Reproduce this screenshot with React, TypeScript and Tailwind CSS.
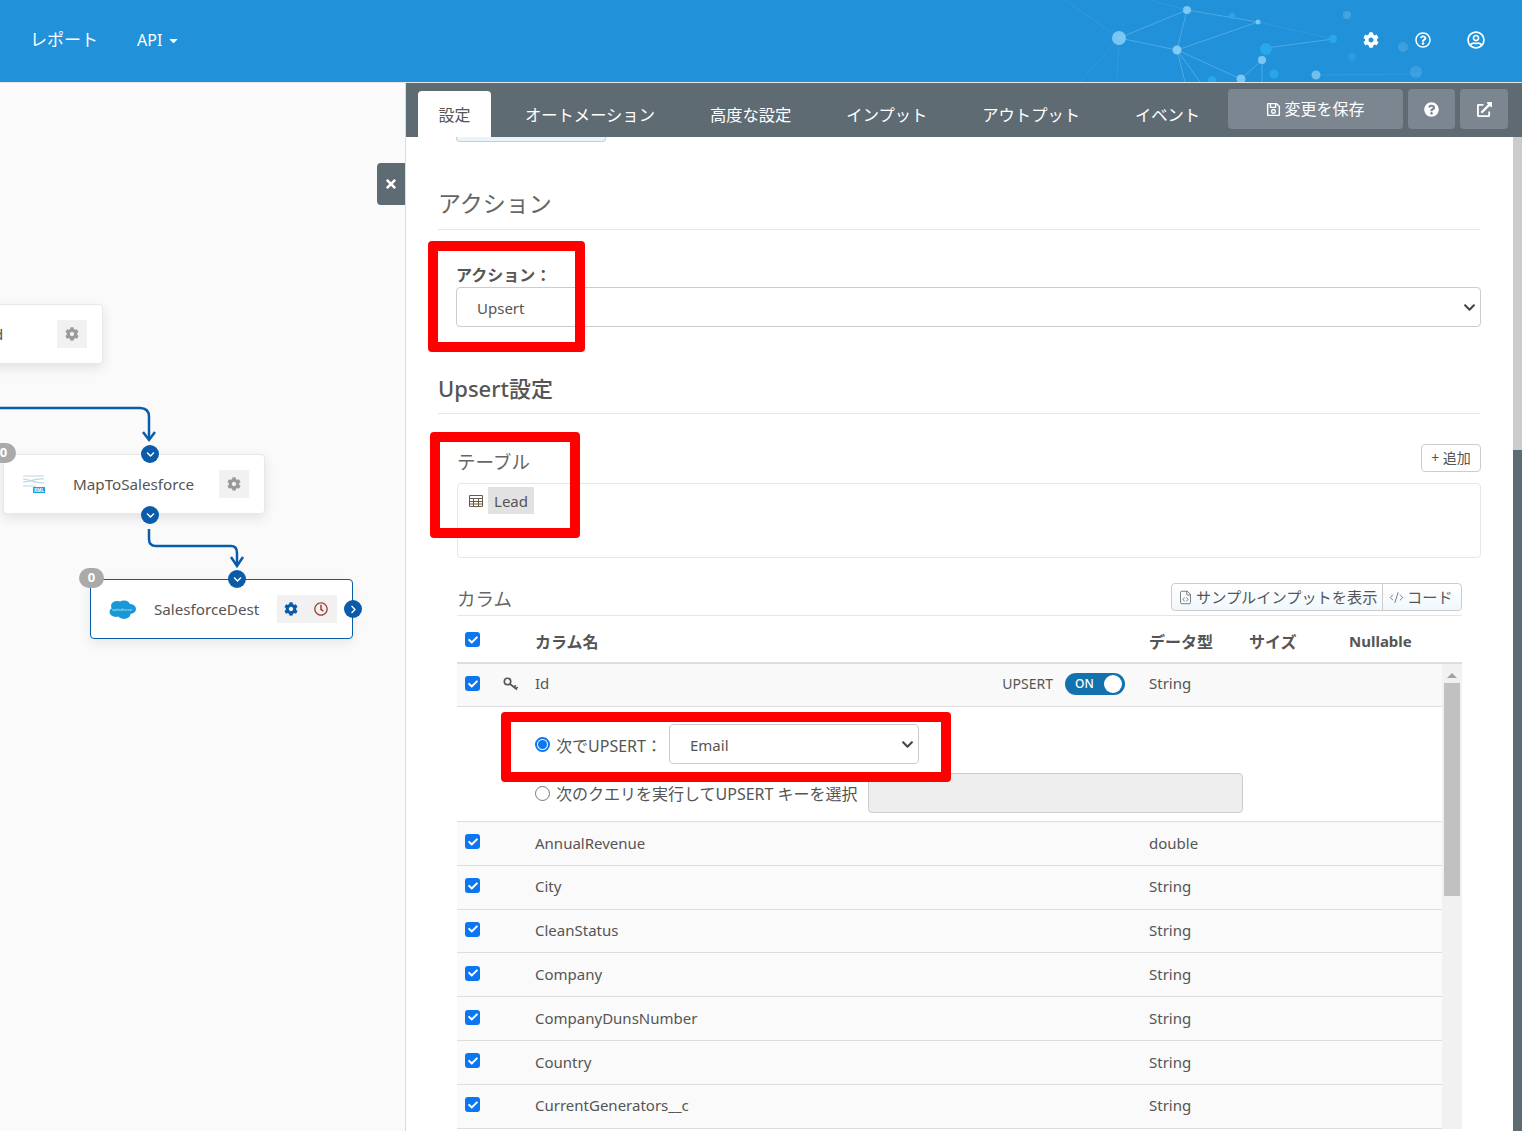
import { FaCog, FaRegSave, FaExternalLinkAlt, FaQuestionCircle, FaRegQuestionCircle, FaRegUserCircle, FaRegClock, FaTimes, FaChevronDown, FaChevronRight, FaCaretDown, FaCheck } from "react-icons/fa"
import { CodeXml, FileCode } from "lucide-react"

const tabs = ["オートメーション", "高度な設定", "インプット", "アウトプット", "イベント"]
const rows: [string, string][] = [
	["AnnualRevenue", "double"],
	["City", "String"],
	["CleanStatus", "String"],
	["Company", "String"],
	["CompanyDunsNumber", "String"],
	["Country", "String"],
	["CurrentGenerators__c", "String"],
]

function Check() {
	return (
		<span className="w-[15px] h-[15px] rounded-[3px] bg-[#0b76ef] flex items-center justify-center text-white">
			<FaCheck className="text-[10px]" />
		</span>
	)
}

function Port({ className }: { className: string }) {
	return (
		<span className={"absolute w-[18px] h-[18px] rounded-full bg-[#0a5cab] text-white flex items-center justify-center " + className}>
			<FaChevronDown className="text-[9px]" />
		</span>
	)
}

function Badge({ className }: { className: string }) {
	return (
		<span className={"absolute w-[25px] h-5 rounded-full bg-[#aaaaaa] text-white text-[13px] font-bold flex items-center justify-center " + className}>0</span>
	)
}

function ToolBtn({ children }: { children: React.ReactNode }) {
	return <span className="w-[30px] h-7 bg-[#f1f1f1] flex items-center justify-center">{children}</span>
}

function Network() {
	return (
		<svg className="absolute right-0 top-0" width="482" height="82" viewBox="1040 0 482 82" fill="none">
			<g stroke="#8fd0f5" strokeOpacity="0.4" strokeWidth="1">
				<path d="M1119 38L1187 10M1119 38L1177 50M1187 10L1177 50M1187 10L1258 22M1258 22L1177 50M1177 50L1241 79M1177 50L1200 82M1177 50L1185 82M1241 79L1262 60M1262 60V82M1266 48L1333 39" />
			</g>
			<g stroke="#8fd0f5" strokeOpacity="0.15" strokeWidth="1">
				<path d="M1119 38L1117 82M1119 38L1080 82M1119 38L1065 0M1187 10L1150 0M1316 75L1420 74M1258 22L1333 39" />
			</g>
			<g fill="#8fd3f7">
				<circle cx="1119" cy="38" r="7" fillOpacity="0.8" />
				<circle cx="1187" cy="10" r="4" fillOpacity="0.8" />
				<circle cx="1177" cy="50" r="4.5" fillOpacity="0.85" />
				<circle cx="1258" cy="22" r="2.5" fillOpacity="0.8" />
				<circle cx="1262" cy="60" r="4" fillOpacity="0.8" />
				<circle cx="1241" cy="79" r="4.5" fillOpacity="0.8" />
				<circle cx="1316" cy="75" r="4.5" fillOpacity="0.7" />
				<circle cx="1347" cy="15" r="4" fillOpacity="0.3" />
			</g>
			<g fill="#2aa6ea">
				<circle cx="1266" cy="49" r="6" />
				<circle cx="1274" cy="74" r="4.5" />
				<circle cx="1333" cy="39" r="4" />
				<circle cx="1232" cy="16" r="3" />
				<circle cx="1212" cy="80" r="4" />
				<circle cx="1352" cy="57" r="4" fillOpacity="0.6" />
			</g>
			<g fill="#7cc2ee" fillOpacity="0.3">
				<circle cx="1403" cy="47" r="5" />
				<circle cx="1416" cy="72" r="6" />
			</g>
		</svg>
	)
}

export default function App() {
	return (
		<div
			className="relative w-[1522px] h-[1131px] overflow-hidden bg-white text-[#555] flex flex-col"
			style={{ fontFamily: '"Noto Sans", "Noto Sans CJK JP", sans-serif' }}
		>
			<header className="relative h-[82px] shrink-0 bg-[#2191d9] text-white flex items-center text-[17px] pb-[2px]">
				<Network />
				<span className="ml-[30px]">レポート</span>
				<span className="ml-[39px] text-[16px] flex items-center gap-[5px]">API <FaCaretDown className="text-[13px]" /></span>
				<div className="absolute top-0 left-[1363px] h-full flex items-center pb-[2px]">
					<FaCog className="text-[16px]" />
					<FaRegQuestionCircle className="text-[16px] ml-[36px]" />
					<FaRegUserCircle className="text-[18px] ml-[36px]" />
				</div>
			</header>

			<div className="flex flex-1 min-h-0 border-t border-[#e6e6e6]">
				{/* canvas */}
				<div className="relative w-[406px] shrink-0 bg-[#fafafa] border-r border-[#dcdcdc] overflow-hidden">
					<span className="absolute left-[377px] top-[80px] w-7 h-[42px] rounded-l-sm bg-[#5f6b73] text-white flex items-center justify-center">
						<FaTimes className="text-[14px]" />
					</span>

					<div className="absolute left-[-40px] top-[221px] w-[143px] h-[60px] bg-white rounded border border-[#e8e8e8] shadow-[0_4px_12px_rgba(0,0,0,0.1)] flex items-center">
						<span className="absolute left-[33px] text-[15px]">d</span>
						<span className="absolute left-[96px]"><ToolBtn><FaCog className="text-[14px] text-[#999]" /></ToolBtn></span>
					</div>

					<svg className="absolute left-0 top-0" width="406" height="540" fill="none" stroke="#0a5cab" strokeWidth="2.5">
						<path d="M0 325H140Q149 325 149 334V356" />
						<path d="M143 349L149 357L155 349" />
						<path d="M149 446V456Q149 463 156 463H231Q237 463 237 470V482" />
						<path d="M231 474L237 483L243 474" />
					</svg>

					<div className="absolute left-[3px] top-[371px] w-[262px] h-[60px] bg-white rounded border border-[#e8e8e8] shadow-[0_4px_12px_rgba(0,0,0,0.1)] flex items-center">
						<svg className="ml-[18px]" width="24" height="20" viewBox="0 0 24 20" fill="none" stroke="#bcd6e6" strokeWidth="1.2">
							<path d="M1 2H22M1 5C8 5 10 9 22 9M1 8C8 8 12 4 22 5M1 12H14" />
							<rect x="11" y="13" width="12" height="6" fill="#1ba0e2" stroke="none" />
							<text x="12" y="18" fontSize="4.5" fontWeight="700" fill="#fff" stroke="none">XML</text>
						</svg>
						<span className="ml-[27px] text-[15.2px]">MapToSalesforce</span>
						<span className="absolute left-[215px]"><ToolBtn><FaCog className="text-[14px] text-[#999]" /></ToolBtn></span>
					</div>
					<Badge className="left-[-9px] top-[360px]" />
					<Port className="left-[141px] top-[362px]" />
					<Port className="left-[141px] top-[423px]" />

					<div className="absolute left-[90px] top-[496px] w-[263px] h-[60px] bg-white rounded border border-[#0a5cab] shadow-[0_4px_12px_rgba(0,0,0,0.08)] flex items-center">
						<svg className="ml-[18px]" width="27" height="19" viewBox="0 0 27 19" fill="#1798d8">
							<ellipse cx="8" cy="6" rx="6" ry="5" />
							<ellipse cx="15" cy="5" rx="6" ry="4.5" />
							<ellipse cx="21" cy="9" rx="6" ry="5" />
							<ellipse cx="7" cy="12" rx="6.5" ry="5" />
							<ellipse cx="15" cy="14" rx="6.5" ry="5" />
							<text x="3" y="11" fontSize="4.2" fill="#d6eef9">salesforce</text>
						</svg>
						<span className="ml-[18px] text-[15.2px]">SalesforceDest</span>
						<span className="absolute left-[186px] flex">
							<ToolBtn><FaCog className="text-[14px] text-[#0a5cab] -ml-[2px]" /></ToolBtn>
							<ToolBtn><FaRegClock className="text-[14px] text-[#a33a32] -ml-[2px]" /></ToolBtn>
						</span>
					</div>
					<Badge className="left-[79px] top-[485px]" />
					<Port className="left-[228px] top-[487px]" />
					<span className="absolute left-[344px] top-[517px] w-[18px] h-[18px] rounded-full bg-[#0a5cab] text-white flex items-center justify-center">
						<FaChevronRight className="text-[9px]" />
					</span>
				</div>

				{/* settings panel */}
				<div className="flex-1 min-w-0 flex flex-col relative">
					<div className="h-[54px] shrink-0 bg-[#5f6b73] flex items-end pl-3 relative">
						<span className="h-[46px] w-[73px] bg-white rounded-t text-[#555] text-[16px] flex items-center justify-center pt-[2px]">設定</span>
						<div className="flex">
							{tabs.map((t) => (
								<span key={t} className="h-[46px] px-[21px] ml-[13px] text-white text-[16.3px] flex items-center pt-[2px] whitespace-nowrap">{t}</span>
							))}
						</div>
						<div className="absolute left-[822px] top-[6px] flex gap-[5px] text-white">
							<span className="w-[175px] h-10 bg-[#7b8690] rounded flex items-center justify-center gap-[3px] text-[16px]"><FaRegSave className="text-[15px]" />変更を保存</span>
							<span className="w-[47px] h-10 bg-[#7b8690] rounded flex items-center justify-center"><FaQuestionCircle className="text-[15px]" /></span>
							<span className="w-[48px] h-10 bg-[#7b8690] rounded flex items-center justify-center"><FaExternalLinkAlt className="text-[15px]" /></span>
						</div>
					</div>

					<div className="flex-1 min-h-0 flex overflow-hidden">
						<div className="flex-1 min-w-0 relative pl-[32px] pr-[33px]">
							<div className="absolute left-[50px] top-0 w-[150px] h-[5px] rounded-b bg-[#e8f5fc] border border-t-0 border-[#ccc]" />
							<h2 className="mt-[48px] text-[23px] leading-9 text-[#666]">アクション</h2>
							<div className="mt-[8px] border-t border-[#e6e6e6]" />
							<div className="mt-[33px] ml-[18px] font-bold text-[16px] leading-6 text-[#555]">アクション：</div>
							<div className="ml-[18px] mr-[-1px] h-10 rounded border border-[#ccc] flex items-center justify-between pl-5 pr-[4px] text-[15px]">
								<span className="pt-[2px]">Upsert</span>
								<FaChevronDown className="text-[13px] text-[#444]" />
							</div>
							<h3 className="mt-[45px] text-[22px] leading-8 font-medium text-[#555]">Upsert設定</h3>
							<div className="mt-[9px] border-t border-[#e6e6e6]" />

							<div className="ml-[19px] mt-[30px] flex items-center justify-between h-7">
								<span className="text-[18.5px] pt-[8px] text-[#666]">テーブル</span>
								<span className="w-[60px] h-7 mr-[-1px] pb-[2px] border border-[#ccc] rounded-sm flex items-center justify-center text-[14px]">+ 追加</span>
							</div>
							<div className="ml-[19px] mr-[-1px] mt-[11px] h-[75px] border border-[#e6e6e6] rounded p-[3px] pl-[10px]">
								<div className="flex items-start">
									<svg className="mt-[7px]" width="16" height="14" viewBox="0 0 16 14" fill="none" stroke="#6b5a48">
										<path d="M1.5 1.5H14.5V12.5H1.5ZM1.5 4.5H14.5M1.5 7.5H14.5M1.5 10H14.5M5.5 4.5V12.5M10.5 4.5V12.5" />
									</svg>
									<span className="ml-[4px] h-[27px] w-[46px] bg-[#e2e2e2] text-[15px] flex items-center justify-center pt-[2px]">Lead</span>
								</div>
							</div>

							<div className="ml-[19px] mr-[18px] mt-[24px] h-[30px] flex items-center justify-between border-b border-[#e6e6e6] pb-[3px] box-content">
								<span className="text-[18.5px] pt-[4px] text-[#666]">カラム</span>
								<div className="flex h-7 border border-[#ccc] rounded bg-gradient-to-b from-white to-[#f0f8fd] text-[15.2px] whitespace-nowrap">
									<span className="w-[211px] pl-[6px] flex items-center gap-[3px] border-r border-[#ccc]"><FileCode size={15} strokeWidth={1.2} />サンプルインプットを表示</span>
									<span className="w-[78px] pl-[6px] flex items-center gap-[3px]"><CodeXml size={15} strokeWidth={1.2} />コード</span>
								</div>
							</div>

							<div className="ml-[19px] mr-[18px]">
								<div className="h-[48px] pt-[5px] grid grid-cols-[78px_614px_100px_100px_1fr] items-center font-bold text-[16px] border-b-2 border-[#ddd] pr-5">
									<span className="pl-2 pb-1"><Check /></span>
									<span>カラム名</span>
									<span>データ型</span>
									<span>サイズ</span>
									<span className="text-[15px]">Nullable</span>
								</div>
								<div className="flex">
									<div className="flex-1 min-w-0">
										<div className="h-[43px] pb-[3px] grid grid-cols-[44px_34px_614px_1fr] items-center bg-[#f9f9f9] border-b border-[#ddd] text-[15px]">
											<span className="pl-2"><Check /></span>
											<svg width="16" height="14" viewBox="0 0 16 14" fill="none" stroke="#555" strokeWidth="1.6" className="ml-[2px]">
												<circle cx="4.5" cy="4.5" r="3.2" />
												<path d="M7 7L14 12.5M11 10L12.8 8.4M13 11.5L14.6 10" />
											</svg>
											<div className="flex items-center justify-between pr-6">
												Id
												<span className="flex items-center gap-3 text-[14px]">
													UPSERT
													<span className="w-[60px] h-[22px] rounded-full bg-[#1272ae] text-white text-[12px] font-medium relative flex items-center pl-[10px]">
														ON
														<span className="absolute right-[3px] top-[2px] w-[18px] h-[18px] rounded-full bg-white" />
													</span>
												</span>
											</div>
											<span>String</span>
										</div>
										<div className="h-[115px] border-b border-[#ddd] pl-[78px] pt-[17px] text-[16px]">
											<div className="flex items-center h-10">
												<span className="w-[15px] h-[15px] rounded-full border-[2px] border-[#0b76ef] flex items-center justify-center bg-white">
													<span className="w-[9px] h-[9px] rounded-full bg-[#0b76ef]" />
												</span>
												<span className="ml-[6px] w-[113px] whitespace-nowrap pt-[3px]">次でUPSERT：</span>
												<span className="w-[250px] h-10 rounded border border-[#ccc] flex items-center justify-between pl-5 pr-[4px] text-[15px]">
													<span className="pt-[3px]">Email</span>
													<FaChevronDown className="text-[13px] text-[#444]" />
												</span>
											</div>
											<div className="mt-[9px] flex items-center h-10">
												<span className="w-[15px] h-[15px] rounded-full border border-[#777] bg-white" />
												<span className="ml-[6px] w-[312px] whitespace-nowrap pt-[1px]">次のクエリを実行してUPSERT キーを選択</span>
												<span className="w-[375px] h-10 rounded border border-[#ccc] bg-[#eeeeee]" />
											</div>
										</div>
										{rows.map(([name, type]) => (
											<div key={name} className="h-[43.8px] pb-[1px] grid grid-cols-[78px_614px_1fr] items-center bg-[#fafafa] border-b border-[#ddd] text-[15px]">
												<span className="pl-2 pb-[2px]"><Check /></span>
												<span>{name}</span>
												<span>{type}</span>
											</div>
										))}
									</div>
									<div className="w-5 shrink-0 bg-[#f1f1f1] px-[2px] relative">
										<span className="block mx-auto mt-[9px] w-0 h-0 border-x-[5px] border-x-transparent border-b-[5px] border-b-[#a3a3a3]" />
										<div className="mt-[5px] h-[213px] bg-[#c1c1c1]" />
									</div>
								</div>
							</div>
						</div>
						<div className="w-[9px] shrink-0 bg-[#5f6b73]">
							<div className="h-[313px] bg-[#cccccc]" />
						</div>
					</div>
				</div>
			</div>

			{/* annotation boxes */}
			<div className="absolute left-[428px] top-[241px] w-[157px] h-[111px] border-[10px] border-[#ff0000] rounded" />
			<div className="absolute left-[430px] top-[432px] w-[150px] h-[106px] border-[10px] border-[#ff0000] rounded" />
			<div className="absolute left-[501px] top-[712px] w-[450px] h-[70px] border-[10px] border-[#ff0000] rounded" />
		</div>
	)
}
